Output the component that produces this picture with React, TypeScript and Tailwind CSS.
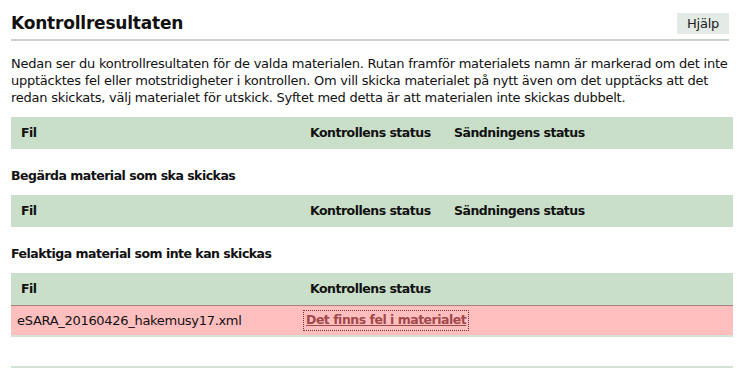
const font = { fontFamily: '"DejaVu Sans", Verdana, sans-serif' };

function HeaderRow({ showSend = true }: { showSend?: boolean }) {
    return (
        <div className="flex h-[32px] items-center bg-[#c9dfc9] text-[12.5px] font-bold tracking-[-0.5px] text-[#111]">
            <div className="w-[299px] pl-[10px]">Fil</div>
            <div className="w-[144px]">Kontrollens status</div>
            {showSend && <div>Sändningens status</div>}
        </div>
    );
}

export default function App() {
    return (
        <div className="w-[746px] h-[369px] overflow-hidden bg-white pl-[11px] pr-[13px] text-[#111]" style={font}>
            {/* rubrik */}
            <div className="mr-[4px] flex items-center justify-between border-b-2 border-[#c9d1c9] pt-[13px] pb-[5px]">
                <h1 className="text-[17px] font-bold leading-[21px] tracking-[-0.2px]">Kontrollresultaten</h1>
                <button className="h-[21px] w-[52px] bg-[#e4ebe6] text-[13px] tracking-[-0.2px] text-[#222]">Hjälp</button>
            </div>

            <p className="mt-[14px] text-[13px] leading-[17px] tracking-[-0.25px]">
                Nedan ser du kontrollresultaten för de valda materialen. Rutan framför materialets namn är markerad om det inte
                upptäcktes fel eller motstridigheter i kontrollen. Om vill skicka materialet på nytt även om det upptäcks att det
                redan skickats, välj materialet för utskick. Syftet med detta är att materialen inte skickas dubbelt.
            </p>

            <div className="mt-[11px]">
                <HeaderRow />
            </div>

            <h2 className="mt-[18px] text-[12.5px] font-bold leading-[17px] tracking-[-0.5px]">Begärda material som ska skickas</h2>
            <div className="mt-[11px]">
                <HeaderRow />
            </div>

            <h2 className="mt-[18px] text-[12.5px] font-bold leading-[17px] tracking-[-0.5px]">Felaktiga material som inte kan skickas</h2>
            <div className="mt-[11px]">
                <HeaderRow showSend={false} />
                <div className="flex h-[32px] items-center border-t border-[#b08080] border-b-2 border-b-[#d4e2d4] bg-[#ffbfbf] text-[13px]">
                    <div className="w-[293px] pl-[6px] tracking-[-0.3px]">eSARA_20160426_hakemusy17.xml</div>
                    <a href="#" className="px-[2px] text-[12.5px] font-bold tracking-[-0.5px] text-[#a2484a] underline outline-1 outline-dotted outline-[#7a3030]">
                        Det finns fel i materialet
                    </a>
                </div>
            </div>

            <div className="mt-[29px] h-[2px] bg-[#d4e2d4]" />
        </div>
    );
}
